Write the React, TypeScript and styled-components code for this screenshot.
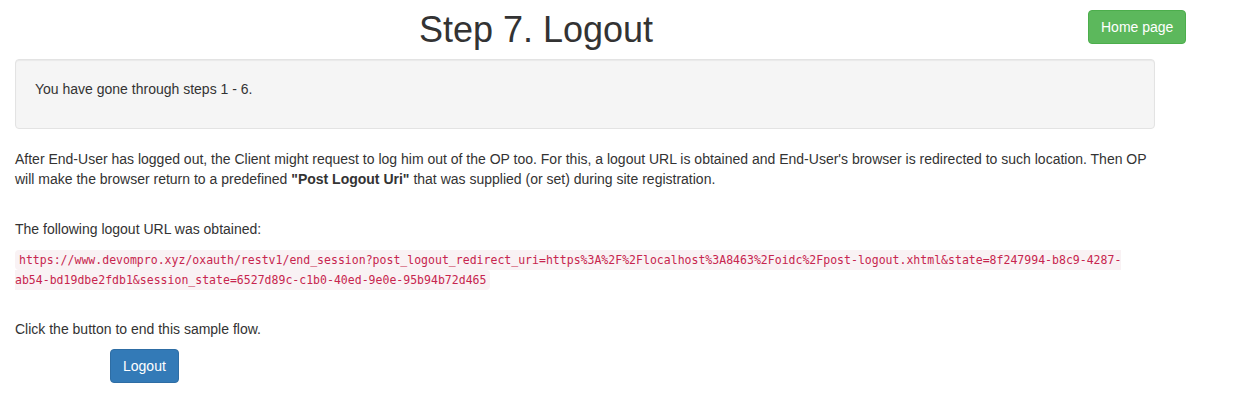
import React from "react";
import styled, { createGlobalStyle } from "styled-components";

const GlobalStyle = createGlobalStyle`
  html, body {
    margin: 0;
    padding: 0;
    background: #fff;
  }
  body {
    font-family: "Liberation Sans", Arial, Helvetica, sans-serif;
    font-size: 14px;
    line-height: 1.42857143;
    color: #333;
  }
  * { box-sizing: border-box; }
`;

const Page = styled.div`
  width: 1234px;
  padding: 0 0 0 15px;
`;

const Header = styled.header`
  display: flex;
  align-items: flex-start;
`;

const Title = styled.h1`
  flex: 0 0 1042px;
  margin: 10px 0 0;
  font-size: 36px;
  line-height: 40px;
  font-weight: 500;
  text-align: center;
  color: #333;
`;

const Content = styled.main`
  width: 1140px;
`;

const Button = styled.button<{ $variant: "success" | "primary" }>`
  display: inline-block;
  flex-shrink: 0;
  white-space: nowrap;
  padding: 6px 12px;
  font-family: inherit;
  font-size: 14px;
  line-height: 20px;
  font-weight: 400;
  color: #fff;
  border-radius: 4px;
  cursor: pointer;
  background: ${(p) => (p.$variant === "success" ? "#5cb85c" : "#337ab7")};
  border: 1px solid ${(p) => (p.$variant === "success" ? "#4cae4c" : "#2e6da4")};
`;

const HomeButton = styled(Button)`
  margin: 10px 0 0 31px;
`;

const Well = styled.div`
  margin: 9px 0 20px;
  padding: 19px;
  min-height: 20px;
  background: #f5f5f5;
  border: 1px solid #e3e3e3;
  border-radius: 4px;
  box-shadow: inset 0 1px 1px rgba(0, 0, 0, 0.05);
`;

const Text = styled.p<{ $gap?: boolean }>`
  margin: ${(p) => (p.$gap ? "30px" : "0")} 0 10px;
`;

const CodeBlock = styled.p`
  margin: 0 0 10px;
  width: 1130px;
`;

const Code = styled.code`
  font-family: "DejaVu Sans Mono", Consolas, "Courier New", monospace;
  font-size: 11.52px;
  padding: 3px 4px;
  color: #c7254e;
  background: #f9f2f4;
  border-radius: 4px;
`;

const Actions = styled.div`
  padding-left: 95px;
`;

const url =
  "https://www.devompro.xyz/oxauth/restv1/end_session?post_logout_redirect_uri=https%3A%2F%2Flocalhost%3A8463%2Foidc%2Fpost-logout.xhtml&state=8f247994-b8c9-4287-ab54-bd19dbe2fdb1&session_state=6527d89c-c1b0-40ed-9e0e-95b94b72d465";

export default function App() {
  return (
    <>
      <GlobalStyle />
      <Page>
        <Header>
          <Title>Step 7. Logout</Title>
          <HomeButton $variant="success">Home page</HomeButton>
        </Header>
        <Content>
          <Well>
            <Text>You have gone through steps 1 - 6.</Text>
          </Well>
          <Text>
            After End-User has logged out, the Client might request to log him out of the OP too. For this, a
            logout URL is obtained and End-User's browser is redirected to such location. Then OP will make the
            browser return to a predefined <b>"Post Logout Uri"</b> that was supplied (or set) during site
            registration.
          </Text>
          <Text $gap>The following logout URL was obtained:</Text>
          <CodeBlock>
            <Code>{url}</Code>
          </CodeBlock>
          <Text $gap>Click the button to end this sample flow.</Text>
          <Actions>
            <Button $variant="primary">Logout</Button>
          </Actions>
        </Content>
      </Page>
    </>
  );
}
